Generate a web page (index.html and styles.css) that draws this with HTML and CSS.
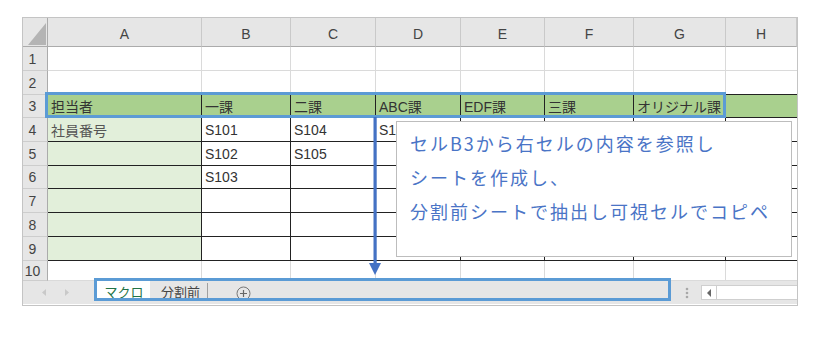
FILE: index.html
```html
<!DOCTYPE html>
<html lang="ja">
<head>
<meta charset="utf-8">
<link rel="stylesheet" href="styles.css">
</head>
<body>
<div class="stage">
  <div class="frame">
    <div class="sheet">
      <div class="corner"><svg width="25" height="29" viewBox="0 0 25 29"><polygon points="5,27 23,27 23,5" fill="#b4b4b4"/></svg></div>
      <div class="ch">A</div><div class="ch">B</div><div class="ch">C</div><div class="ch">D</div><div class="ch">E</div><div class="ch">F</div><div class="ch">G</div><div class="ch h">H</div>

      <div class="rh">1</div>
      <div class="c"></div><div class="c"></div><div class="c"></div><div class="c"></div><div class="c"></div><div class="c"></div><div class="c"></div><div class="c h"></div>

      <div class="rh">2</div>
      <div class="c kb"></div><div class="c kb"></div><div class="c kb"></div><div class="c kb"></div><div class="c kb"></div><div class="c kb"></div><div class="c kb"></div><div class="c kb h"></div>

      <div class="rh">3</div>
      <div class="c k g">担当者</div><div class="c k g">一課</div><div class="c k g">二課</div><div class="c k g">ABC課</div><div class="c k g">EDF課</div><div class="c k g">三課</div><div class="c k g">オリジナル課</div><div class="c k g h"></div>

      <div class="rh">4</div>
      <div class="c k lg soft">社員番号</div><div class="c k">S101</div><div class="c k">S104</div><div class="c k">S106</div><div class="c k"></div><div class="c k"></div><div class="c k"></div><div class="c k h"></div>

      <div class="rh">5</div>
      <div class="c k lg"></div><div class="c k">S102</div><div class="c k">S105</div><div class="c k"></div><div class="c k"></div><div class="c k"></div><div class="c k"></div><div class="c k h"></div>

      <div class="rh">6</div>
      <div class="c k lg"></div><div class="c k">S103</div><div class="c k"></div><div class="c k"></div><div class="c k"></div><div class="c k"></div><div class="c k"></div><div class="c k h"></div>

      <div class="rh">7</div>
      <div class="c k lg"></div><div class="c k"></div><div class="c k"></div><div class="c k"></div><div class="c k"></div><div class="c k"></div><div class="c k"></div><div class="c k h"></div>

      <div class="rh">8</div>
      <div class="c k lg"></div><div class="c k"></div><div class="c k"></div><div class="c k"></div><div class="c k"></div><div class="c k"></div><div class="c k"></div><div class="c k h"></div>

      <div class="rh">9</div>
      <div class="c k lg"></div><div class="c k"></div><div class="c k"></div><div class="c k"></div><div class="c k"></div><div class="c k"></div><div class="c k"></div><div class="c k h"></div>

      <div class="rh">10</div>
      <div class="c"></div><div class="c"></div><div class="c"></div><div class="c"></div><div class="c"></div><div class="c"></div><div class="c"></div><div class="c h"></div>
    </div>

    <div class="tabbar">
      <div class="nav"><svg width="73" height="23" viewBox="0 0 73 23"><polygon points="23,8 23,15 19,11.5" fill="#c9c9c9"/><polygon points="42,8 42,15 46,11.5" fill="#c9c9c9"/></svg></div>
      <div class="tab active">マクロ</div>
      <div class="tab">分割前</div>
      <div class="add"><svg width="15" height="15" viewBox="0 0 15 15"><circle cx="7.5" cy="7.5" r="6.5" fill="none" stroke="#777" stroke-width="1"/><path d="M7.5 4v7M4 7.5h7" stroke="#666" stroke-width="1.2"/></svg></div>
      <div class="spacer"></div>
      <div class="dots"><svg width="4" height="12" viewBox="0 0 4 12"><circle cx="2" cy="2" r="1.3" fill="#a8a8a8"/><circle cx="2" cy="6" r="1.3" fill="#a8a8a8"/><circle cx="2" cy="10" r="1.3" fill="#a8a8a8"/></svg></div>
      <div class="hscroll">
        <div class="sbtn"><svg width="5" height="8" viewBox="0 0 5 8"><polygon points="4,0 4,8 0,4" fill="#666"/></svg></div>
        <div class="strack"></div>
      </div>
    </div>
  </div>

  <div class="rowmark"></div>
  <div class="tabmark"></div>
  <svg class="arrow" width="14" height="160" viewBox="0 0 14 160"><rect x="5.5" y="0" width="3.2" height="148" fill="#4472c4"/><polygon points="1,146 13,146 7,158" fill="#4472c4"/></svg>
  <div class="note">
    <p>セルB3から右セルの内容を参照し</p>
    <p>シートを作成し、</p>
    <p>分割前シートで抽出し可視セルでコピペ</p>
  </div>
</div>
</body>
</html>
```

FILE: styles.css
```css
* { box-sizing: border-box; }
html, body { margin: 0; padding: 0; background: #fff; }
body { font-family: "Liberation Sans", "Noto Sans CJK JP", sans-serif; }

.stage {
  position: relative;
  width: 822px;
  height: 338px;
  overflow: hidden;
  padding: 17px 0 0 22px;
}

.frame {
  width: 776px;
  border: 1px solid #c4c4c4;
  background: #fff;
  overflow: hidden;
}

.sheet {
  display: grid;
  grid-template-columns: 25px 154px 89px 85px 85px 84px 89px 92px 71px;
  grid-template-rows: 29px 24px 24px 23px 24px 24px 23px 24px 24px 24px 20px;
  font-size: 14px;
  color: #333;
}

.corner {
  background: #e6e6e6;
  border-right: 1px solid #ababab;
  border-bottom: 1px solid #ababab;
}
.corner svg { display: block; }

.ch {
  background: #e6e6e6;
  border-right: 1px solid #c9c9c9;
  border-bottom: 1px solid #ababab;
  display: flex;
  align-items: center;
  justify-content: center;
  padding-top: 4px;
  font-family: "Liberation Sans", sans-serif;
  font-size: 14px;
  color: #444;
}

.rh {
  background: #e6e6e6;
  border-right: 1px solid #ababab;
  border-bottom: 1px solid #cdcdcd;
  display: flex;
  align-items: center;
  justify-content: center;
  padding-right: 5px;
  font-family: "Liberation Sans", sans-serif;
  font-size: 14px;
  color: #444;
  overflow: visible;
}

.c {
  border-right: 1px solid #dadada;
  border-bottom: 1px solid #dadada;
  display: flex;
  align-items: center;
  padding-left: 3px;
  white-space: nowrap;
  overflow: hidden;
  font-family: "Liberation Sans", "Noto Sans CJK JP", sans-serif;
  font-size: 14px;
  color: #333;
}
.c.kb { border-bottom-color: #222; }
.c.k { border-right-color: #222; border-bottom-color: #222; }
.c.h { border-right: 0; }
.g { background: #a9d08e; }
.lg { background: #e2efda; }
.soft { color: #555; }

.tabbar {
  height: 24px;
  background: #e6e6e6;
  border-bottom: 1px solid #fff;
  display: flex;
  align-items: flex-start;
  font-family: "Noto Sans CJK JP", sans-serif;
  font-size: 13px;
}
.nav { width: 73px; height: 23px; }
.nav svg { display: block; }

.tab {
  height: 20px;
  display: flex;
  align-items: center;
  justify-content: center;
  color: #444;
  line-height: 1;
}
.tab.active {
  width: 54px;
  background: #fff;
  color: #217346;
  padding-left: 2px;
}
.tab:not(.active) {
  width: 58px;
  border-right: 1px solid #a0a0a0;
  height: 17px;
  margin-top: 2px;
  padding-left: 4px;
}

.add { margin-left: 28px; margin-top: 5px; }
.add svg { display: block; }

.spacer { flex: 1; }

.dots { width: 4px; margin-top: 6px; margin-right: 12px; }
.dots svg { display: block; }

.hscroll {
  display: flex;
  margin-top: 4px;
  height: 15px;
}
.sbtn {
  width: 16px;
  height: 15px;
  background: #fff;
  border: 1px solid #cfcfcf;
  display: flex;
  align-items: center;
  justify-content: center;
}
.strack {
  width: 80px;
  height: 15px;
  background: #fff;
  border: 1px solid #cfcfcf;
  border-left: 0;
  border-right: 0;
}

.rowmark {
  position: absolute;
  left: 45px;
  top: 92px;
  width: 681px;
  height: 26px;
  border: 3px solid #5b9bd5;
}

.tabmark {
  position: absolute;
  left: 94px;
  top: 278px;
  width: 577px;
  height: 23px;
  border: 3px solid #5b9bd5;
}

.arrow {
  position: absolute;
  left: 368px;
  top: 117px;
}

.note {
  position: absolute;
  left: 396px;
  top: 121px;
  width: 396px;
  height: 136px;
  background: #fff;
  border: 1px solid #bdbdbd;
  padding: 4px 0 0 13px;
  font-family: "Noto Sans CJK JP", sans-serif;
  font-size: 18px;
  letter-spacing: 2px;
  color: #4a74c6;
}
.note p {
  margin: 0;
  line-height: 34px;
  white-space: nowrap;
}
```
